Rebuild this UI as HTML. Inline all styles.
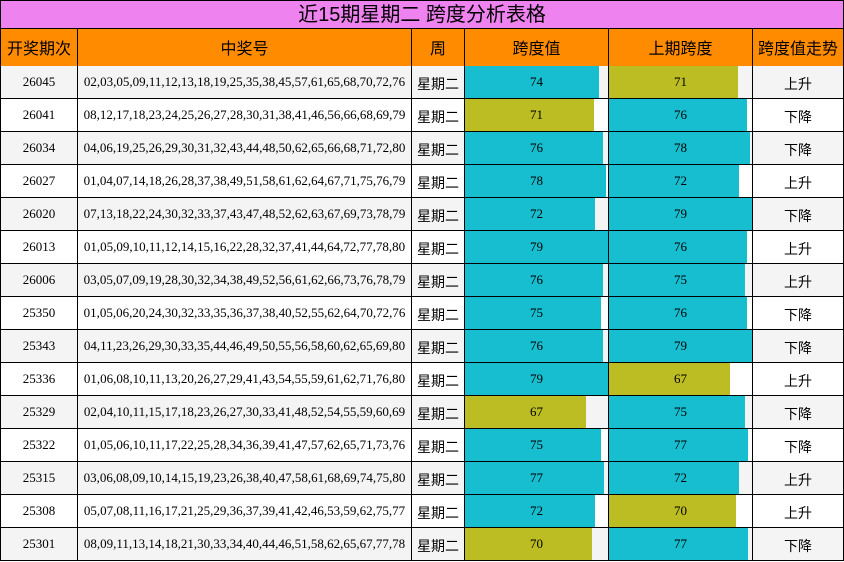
<!DOCTYPE html>
<html><head><meta charset="utf-8"><style>
*{margin:0;padding:0;box-sizing:border-box}
body{width:844px;height:562px;background:#fff;position:relative;overflow:hidden;font-family:"Liberation Sans","Noto Sans CJK SC",sans-serif}
#t{position:absolute;left:0;top:0;width:844px;height:30px;background:#ee82ee;border:1px solid #000;border-bottom:2px solid #000;text-align:center;font-size:20px;line-height:29px;color:#000}
.r{position:absolute;left:0;width:844px;display:grid;grid-template-columns:76px 334px 53px 144px 144px 91px;border-bottom:1px solid #000;border-left:1px solid #000;border-right:1px solid #000}
.r>div{border-left:1px solid #000;position:relative;text-align:center;overflow:hidden;white-space:nowrap}
.r>div:first-child{border-left:none}
.h{top:29px;height:38px;background:#ff8c00;font-size:16px;line-height:41px}
.d{height:33px;font-size:13px;line-height:31px}
.n{font-family:"Liberation Serif",serif}
.z{font-size:14px;line-height:37px}
.b{font-family:"Liberation Serif",serif}
.b i{position:absolute;left:0;top:0;bottom:0;display:block}
.b span{position:relative}
.c i{background:#17becf}.o i{background:#bcbd22}
</style></head><body>
<div id="t">近15期星期二 跨度分析表格</div>
<div class="r h"><div>开奖期次</div><div>中奖号</div><div>周</div><div>跨度值</div><div>上期跨度</div><div>跨度值走势</div></div>
<div class="r d" style="top:66px;background:#f4f4f4"><div class="n">26045</div><div class="n">02,03,05,09,11,12,13,18,19,25,35,38,45,57,61,65,68,70,72,76</div><div class="z">星期二</div><div class="b c"><i style="width:134px"></i><span>74</span></div><div class="b o"><i style="width:129px"></i><span>71</span></div><div class="z">上升</div></div>
<div class="r d" style="top:99px;background:#fff"><div class="n">26041</div><div class="n">08,12,17,18,23,24,25,26,27,28,30,31,38,41,46,56,66,68,69,79</div><div class="z">星期二</div><div class="b o"><i style="width:129px"></i><span>71</span></div><div class="b c"><i style="width:138px"></i><span>76</span></div><div class="z">下降</div></div>
<div class="r d" style="top:132px;background:#f4f4f4"><div class="n">26034</div><div class="n">04,06,19,25,26,29,30,31,32,43,44,48,50,62,65,66,68,71,72,80</div><div class="z">星期二</div><div class="b c"><i style="width:138px"></i><span>76</span></div><div class="b c"><i style="width:141px"></i><span>78</span></div><div class="z">下降</div></div>
<div class="r d" style="top:165px;background:#fff"><div class="n">26027</div><div class="n">01,04,07,14,18,26,28,37,38,49,51,58,61,62,64,67,71,75,76,79</div><div class="z">星期二</div><div class="b c"><i style="width:141px"></i><span>78</span></div><div class="b c"><i style="width:130px"></i><span>72</span></div><div class="z">上升</div></div>
<div class="r d" style="top:198px;background:#f4f4f4"><div class="n">26020</div><div class="n">07,13,18,22,24,30,32,33,37,43,47,48,52,62,63,67,69,73,78,79</div><div class="z">星期二</div><div class="b c"><i style="width:130px"></i><span>72</span></div><div class="b c"><i style="width:143px"></i><span>79</span></div><div class="z">下降</div></div>
<div class="r d" style="top:231px;background:#fff"><div class="n">26013</div><div class="n">01,05,09,10,11,12,14,15,16,22,28,32,37,41,44,64,72,77,78,80</div><div class="z">星期二</div><div class="b c"><i style="width:143px"></i><span>79</span></div><div class="b c"><i style="width:138px"></i><span>76</span></div><div class="z">上升</div></div>
<div class="r d" style="top:264px;background:#f4f4f4"><div class="n">26006</div><div class="n">03,05,07,09,19,28,30,32,34,38,49,52,56,61,62,66,73,76,78,79</div><div class="z">星期二</div><div class="b c"><i style="width:138px"></i><span>76</span></div><div class="b c"><i style="width:136px"></i><span>75</span></div><div class="z">上升</div></div>
<div class="r d" style="top:297px;background:#fff"><div class="n">25350</div><div class="n">01,05,06,20,24,30,32,33,35,36,37,38,40,52,55,62,64,70,72,76</div><div class="z">星期二</div><div class="b c"><i style="width:136px"></i><span>75</span></div><div class="b c"><i style="width:138px"></i><span>76</span></div><div class="z">下降</div></div>
<div class="r d" style="top:330px;background:#f4f4f4"><div class="n">25343</div><div class="n">04,11,23,26,29,30,33,35,44,46,49,50,55,56,58,60,62,65,69,80</div><div class="z">星期二</div><div class="b c"><i style="width:138px"></i><span>76</span></div><div class="b c"><i style="width:143px"></i><span>79</span></div><div class="z">下降</div></div>
<div class="r d" style="top:363px;background:#fff"><div class="n">25336</div><div class="n">01,06,08,10,11,13,20,26,27,29,41,43,54,55,59,61,62,71,76,80</div><div class="z">星期二</div><div class="b c"><i style="width:143px"></i><span>79</span></div><div class="b o"><i style="width:121px"></i><span>67</span></div><div class="z">上升</div></div>
<div class="r d" style="top:396px;background:#f4f4f4"><div class="n">25329</div><div class="n">02,04,10,11,15,17,18,23,26,27,30,33,41,48,52,54,55,59,60,69</div><div class="z">星期二</div><div class="b o"><i style="width:121px"></i><span>67</span></div><div class="b c"><i style="width:136px"></i><span>75</span></div><div class="z">下降</div></div>
<div class="r d" style="top:429px;background:#fff"><div class="n">25322</div><div class="n">01,05,06,10,11,17,22,25,28,34,36,39,41,47,57,62,65,71,73,76</div><div class="z">星期二</div><div class="b c"><i style="width:136px"></i><span>75</span></div><div class="b c"><i style="width:139px"></i><span>77</span></div><div class="z">下降</div></div>
<div class="r d" style="top:462px;background:#f4f4f4"><div class="n">25315</div><div class="n">03,06,08,09,10,14,15,19,23,26,38,40,47,58,61,68,69,74,75,80</div><div class="z">星期二</div><div class="b c"><i style="width:139px"></i><span>77</span></div><div class="b c"><i style="width:130px"></i><span>72</span></div><div class="z">上升</div></div>
<div class="r d" style="top:495px;background:#fff"><div class="n">25308</div><div class="n">05,07,08,11,16,17,21,25,29,36,37,39,41,42,46,53,59,62,75,77</div><div class="z">星期二</div><div class="b c"><i style="width:130px"></i><span>72</span></div><div class="b o"><i style="width:127px"></i><span>70</span></div><div class="z">上升</div></div>
<div class="r d" style="top:528px;background:#f4f4f4"><div class="n">25301</div><div class="n">08,09,11,13,14,18,21,30,33,34,40,44,46,51,58,62,65,67,77,78</div><div class="z">星期二</div><div class="b o"><i style="width:127px"></i><span>70</span></div><div class="b c"><i style="width:139px"></i><span>77</span></div><div class="z">下降</div></div>
</body></html>
